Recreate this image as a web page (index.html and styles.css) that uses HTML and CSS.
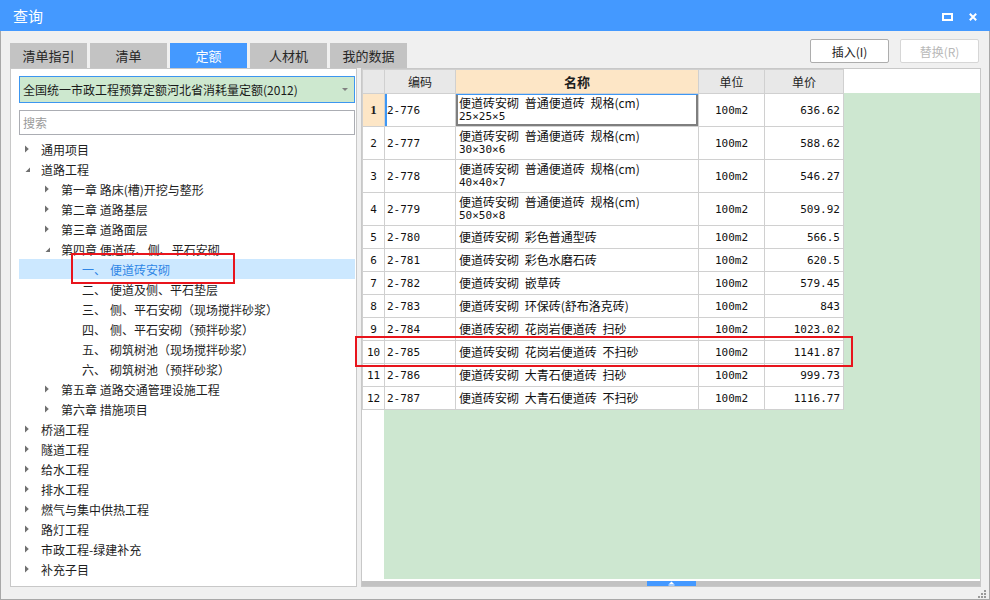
FILE: index.html
```html
<!DOCTYPE html>
<html lang="zh-CN">
<head>
<meta charset="utf-8">
<title>查询</title>
<link rel="stylesheet" href="styles.css">
</head>
<body>
<div class="window">
  <div class="titlebar">
    <span class="title">查询</span>
    <div class="win-ctrls">
      <svg width="11" height="8" viewBox="0 0 11 8"><rect x="1" y="1" width="9" height="6" fill="none" stroke="#fff" stroke-width="2"/></svg>
      <svg width="8" height="8" viewBox="0 0 8 8"><path d="M0.8 0.8L7.2 7.2M7.2 0.8L0.8 7.2" stroke="#fff" stroke-width="2"/></svg>
    </div>
  </div>
  <div class="toolbar">
    <div class="tabs">
      <div class="tab">清单指引</div>
      <div class="tab">清单</div>
      <div class="tab active">定额</div>
      <div class="tab">人材机</div>
      <div class="tab">我的数据</div>
    </div>
    <div class="actions">
      <button class="btn">插入(I)</button>
      <button class="btn disabled">替换(R)</button>
    </div>
  </div>
  <div class="main">
    <div class="left">
      <div class="combo"><span>全国统一市政工程预算定额河北省消耗量定额(2012)</span><span class="caret"></span></div>
      <div class="search">搜索</div>
      <ul class="tree">
        <li class="l0"><svg class="arr" viewBox="0 0 8 8"><path d="M2 0.5L5.8 4L2 7.5Z"/></svg>通用项目</li>
        <li class="l0"><svg class="arr" viewBox="0 0 8 8"><path d="M7 2.5L7 7L2.5 7Z"/></svg>道路工程</li>
        <li class="l1"><svg class="arr" viewBox="0 0 8 8"><path d="M2 0.5L5.8 4L2 7.5Z"/></svg>第一章 路床(槽)开挖与整形</li>
        <li class="l1"><svg class="arr" viewBox="0 0 8 8"><path d="M2 0.5L5.8 4L2 7.5Z"/></svg>第二章 道路基层</li>
        <li class="l1"><svg class="arr" viewBox="0 0 8 8"><path d="M2 0.5L5.8 4L2 7.5Z"/></svg>第三章 道路面层</li>
        <li class="l1"><svg class="arr" viewBox="0 0 8 8"><path d="M7 2.5L7 7L2.5 7Z"/></svg>第四章 便道砖、侧、平石安砌</li>
        <li class="l2 sel">一、<span class="gap">便道砖安砌</span></li>
        <li class="l2">二、<span class="gap">便道及侧、平石垫层</span></li>
        <li class="l2">三、<span class="gap">侧、平石安砌（现场搅拌砂浆）</span></li>
        <li class="l2">四、<span class="gap">侧、平石安砌（预拌砂浆）</span></li>
        <li class="l2">五、<span class="gap">砌筑树池（现场搅拌砂浆）</span></li>
        <li class="l2">六、<span class="gap">砌筑树池（预拌砂浆）</span></li>
        <li class="l1"><svg class="arr" viewBox="0 0 8 8"><path d="M2 0.5L5.8 4L2 7.5Z"/></svg>第五章 道路交通管理设施工程</li>
        <li class="l1"><svg class="arr" viewBox="0 0 8 8"><path d="M2 0.5L5.8 4L2 7.5Z"/></svg>第六章 措施项目</li>
        <li class="l0"><svg class="arr" viewBox="0 0 8 8"><path d="M2 0.5L5.8 4L2 7.5Z"/></svg>桥涵工程</li>
        <li class="l0"><svg class="arr" viewBox="0 0 8 8"><path d="M2 0.5L5.8 4L2 7.5Z"/></svg>隧道工程</li>
        <li class="l0"><svg class="arr" viewBox="0 0 8 8"><path d="M2 0.5L5.8 4L2 7.5Z"/></svg>给水工程</li>
        <li class="l0"><svg class="arr" viewBox="0 0 8 8"><path d="M2 0.5L5.8 4L2 7.5Z"/></svg>排水工程</li>
        <li class="l0"><svg class="arr" viewBox="0 0 8 8"><path d="M2 0.5L5.8 4L2 7.5Z"/></svg>燃气与集中供热工程</li>
        <li class="l0"><svg class="arr" viewBox="0 0 8 8"><path d="M2 0.5L5.8 4L2 7.5Z"/></svg>路灯工程</li>
        <li class="l0"><svg class="arr" viewBox="0 0 8 8"><path d="M2 0.5L5.8 4L2 7.5Z"/></svg>市政工程-绿建补充</li>
        <li class="l0"><svg class="arr" viewBox="0 0 8 8"><path d="M2 0.5L5.8 4L2 7.5Z"/></svg>补充子目</li>
      </ul>
    </div>
    <div class="right">
      <div class="grid-area">
        <table class="grid">
          <colgroup><col class="c-rn"><col class="c-code"><col class="c-name"><col class="c-unit"><col class="c-price"></colgroup>
          <tr class="head"><th></th><th>编码</th><th class="hname">名称</th><th>单位</th><th>单价</th></tr>
          <tr class="tall"><td class="rn cur">1</td><td class="code n sel">2-776</td><td class="name focus"><div class="ln">便道砖安砌 普通便道砖 规格(cm)</div><div class="ln dim">25×25×5</div></td><td class="unit n">100m2</td><td class="price n">636.62</td></tr>
          <tr class="tall"><td class="rn n">2</td><td class="code n">2-777</td><td class="name"><div class="ln">便道砖安砌 普通便道砖 规格(cm)</div><div class="ln dim">30×30×6</div></td><td class="unit n">100m2</td><td class="price n">588.62</td></tr>
          <tr class="tall"><td class="rn n">3</td><td class="code n">2-778</td><td class="name"><div class="ln">便道砖安砌 普通便道砖 规格(cm)</div><div class="ln dim">40×40×7</div></td><td class="unit n">100m2</td><td class="price n">546.27</td></tr>
          <tr class="tall"><td class="rn n">4</td><td class="code n">2-779</td><td class="name"><div class="ln">便道砖安砌 普通便道砖 规格(cm)</div><div class="ln dim">50×50×8</div></td><td class="unit n">100m2</td><td class="price n">509.92</td></tr>
          <tr><td class="rn n">5</td><td class="code n">2-780</td><td class="name">便道砖安砌 彩色普通型砖</td><td class="unit n">100m2</td><td class="price n">566.5</td></tr>
          <tr><td class="rn n">6</td><td class="code n">2-781</td><td class="name">便道砖安砌 彩色水磨石砖</td><td class="unit n">100m2</td><td class="price n">620.5</td></tr>
          <tr><td class="rn n">7</td><td class="code n">2-782</td><td class="name">便道砖安砌 嵌草砖</td><td class="unit n">100m2</td><td class="price n">579.45</td></tr>
          <tr><td class="rn n">8</td><td class="code n">2-783</td><td class="name">便道砖安砌 环保砖(舒布洛克砖)</td><td class="unit n">100m2</td><td class="price n">843</td></tr>
          <tr><td class="rn n">9</td><td class="code n">2-784</td><td class="name">便道砖安砌 花岗岩便道砖 扫砂</td><td class="unit n">100m2</td><td class="price n">1023.02</td></tr>
          <tr><td class="rn n">10</td><td class="code n">2-785</td><td class="name">便道砖安砌 花岗岩便道砖 不扫砂</td><td class="unit n">100m2</td><td class="price n">1141.87</td></tr>
          <tr><td class="rn n">11</td><td class="code n">2-786</td><td class="name">便道砖安砌 大青石便道砖 扫砂</td><td class="unit n">100m2</td><td class="price n">999.73</td></tr>
          <tr><td class="rn n">12</td><td class="code n">2-787</td><td class="name">便道砖安砌 大青石便道砖 不扫砂</td><td class="unit n">100m2</td><td class="price n">1116.77</td></tr>
        </table>
      </div>
      <div class="hscroll">
        <div class="thumb"><svg width="7" height="5" viewBox="0 0 7 5"><path d="M3.5 0.5L6 3H1Z" fill="#fff"/><rect x="0.5" y="3.5" width="6" height="1" fill="#fff"/></svg></div>
      </div>
    </div>
  </div>
  <div class="statusbar">
    <svg width="8" height="8" viewBox="0 0 8 8" fill="#9a9a9a"><rect x="6" y="0" width="2" height="2"/><rect x="3" y="3" width="2" height="2"/><rect x="6" y="3" width="2" height="2"/><rect x="0" y="6" width="2" height="2"/><rect x="3" y="6" width="2" height="2"/><rect x="6" y="6" width="2" height="2"/></svg>
  </div>
  <div class="mark mark-tree"></div>
  <div class="mark mark-row"></div>
</div>
</body>
</html>
```

FILE: styles.css
```css
* { box-sizing: border-box; }
html, body { margin: 0; padding: 0; }
body {
  background: #f0f0f0;
  font-family: "Noto Sans CJK SC", "Noto Sans", sans-serif;
  font-size: 12px;
  color: #1e1e1e;
}
.window {
  position: relative;
  width: 990px;
  height: 600px;
  background: #f0f0f0;
  border: 1px solid #a8a8a8;
  border-top: 0;
  display: flex;
  flex-direction: column;
}
.titlebar {
  height: 31px;
  flex: none;
  margin: 0 -1px;
  background: #4499ff;
  color: #fff;
  display: flex;
  align-items: center;
  justify-content: space-between;
  padding: 0 13px 0 13px;
}
.title { font-size: 15px; line-height: 1; }
.win-ctrls { display: flex; align-items: center; gap: 16px; margin-top: 2px; }
.win-ctrls svg { display: block; }

.toolbar {
  height: 37px;
  flex: none;
  display: flex;
  justify-content: space-between;
  padding: 0 10px 0 9px;
}
.tabs { display: flex; gap: 3px; align-self: flex-end; }
.tab {
  width: 77px;
  height: 25px;
  background: #c3c3c3;
  color: #262626;
  font-size: 13px;
  display: flex;
  align-items: center;
  justify-content: center;
}
.tab.active { background: #4499ff; color: #fff; }
.actions { display: flex; gap: 11px; padding-top: 8px; }
.btn {
  width: 79px;
  height: 24px;
  padding: 0;
  border: 1px solid #adadad;
  border-radius: 2px;
  background: #fff;
  color: #222;
  font: 12px "Noto Sans CJK SC", sans-serif;
}
.btn.disabled { color: #b8b8b8; border-color: #d6d6d6; }

.main {
  height: 519px;
  flex: none;
  display: flex;
  gap: 4px;
  padding: 0 8px 0 9px;
}
.left {
  width: 347px;
  background: #fff;
  border: 1px solid #c8c8c8;
  padding: 7px 1px 0 8px;
  display: flex;
  flex-direction: column;
}
.combo {
  height: 27px;
  border: 1px solid #3c96f0;
  background: #cde8cf;
  display: flex;
  align-items: center;
  padding-left: 3px;
  color: #1a1a1a;
  font-size: 12px;
}
.caret {
  margin-left: auto;
  margin-right: 6px;
  width: 0;
  height: 0;
  border-left: 3px solid transparent;
  border-right: 3px solid transparent;
  border-top: 3px solid #808080;
}
.search {
  height: 25px;
  margin-top: 7px;
  border: 1px solid #abadb3;
  color: #9a9a9a;
  padding-left: 3px;
  display: flex;
  align-items: center;
}
.tree { list-style: none; margin: 4px 0 0; padding: 0; }
.tree li {
  height: 20px;
  display: flex;
  align-items: center;
  white-space: nowrap;
  color: #1e1e1e;
}
.tree .arr { width: 8px; height: 8px; margin-right: 10px; flex: none; fill: #707070; }
.tree .l0 { padding-left: 4px; }
.tree .l1 { padding-left: 24px; }
.tree .l2 { padding-left: 63px; }
.tree .gap { margin-left: 4px; }
.tree .sel { background: #cce8ff; color: #2f86e6; }

.right {
  width: 620px;
  border: 1px solid #c8c8c8;
  background: #fff;
  display: flex;
  flex-direction: column;
}
.grid-area {
  flex: 1;
  background:
    linear-gradient(#fff, #fff) 0 0 / 100% 24px no-repeat,
    linear-gradient(#fff, #fff) 0 0 / 22px 100% no-repeat,
    #cde7d0;
}
.grid {
  border-collapse: collapse;
  table-layout: fixed;
  width: 481px;
}
.c-rn { width: 22px; }
.c-code { width: 71px; }
.c-name { width: 243px; }
.c-unit { width: 66px; }
.c-price { width: 79px; }
.grid th, .grid td {
  border: 1px solid #d0d0d0;
  background: #fff;
  padding: 0 2px;
  white-space: nowrap;
  overflow: hidden;
}
.grid tr { height: 23px; }
.grid tr.head { height: 24px; }
.grid tr.tall { height: 33px; }
.grid th {
  background: #e8e8e8;
  font-weight: normal;
  font-size: 12px;
  color: #1e1e1e;
}
.grid th.hname { background: #fde6c6; font-weight: bold; font-size: 13px; }
.grid .n { font: 11px "DejaVu Sans Mono", monospace; color: #111; }
.grid .rn { text-align: center; padding: 0; }
.grid .rn.cur { background: #fde6c6; font: bold 13px "Liberation Serif", serif; }
.grid .code { padding-left: 2px; }
.grid .name { font-size: 12px; line-height: 16px; padding: 0 3px; word-spacing: 3px; color: #111; }
.grid .name .ln { height: 15px; line-height: 15px; }
.grid .name .dim { font: 11px "DejaVu Sans Mono", monospace; word-spacing: 0; }
.grid .unit { text-align: center; }
.grid .price { text-align: right; padding-right: 3px; }
.grid .code.sel { box-shadow: inset 2px 0 0 #3d97f5; }
.grid .name.focus {
  box-shadow: inset 0 1px 0 #3d97f5, inset 2px 0 0 #7f7f7f, inset -2px 0 0 #7f7f7f, inset 0 -2px 0 #7f7f7f;
}
.hscroll {
  height: 5px;
  margin-top: 2px;
  background: #c2c2c2;
  display: flex;
  justify-content: center;
}
.thumb {
  width: 49px;
  height: 5px;
  background: #4499ff;
  display: flex;
  align-items: center;
  justify-content: center;
}
.thumb svg { display: block; }

.statusbar {
  flex: 1;
  display: flex;
  justify-content: flex-end;
  align-items: flex-end;
  padding: 0 3px 1px 0;
}
.statusbar svg { display: block; }

.mark {
  position: absolute;
  border: 2px solid #e8141c;
  pointer-events: none;
}
.mark-tree { left: 70px; top: 253px; width: 164px; height: 31px; }
.mark-row { left: 354px; top: 336px; width: 498px; height: 31px; }
```
